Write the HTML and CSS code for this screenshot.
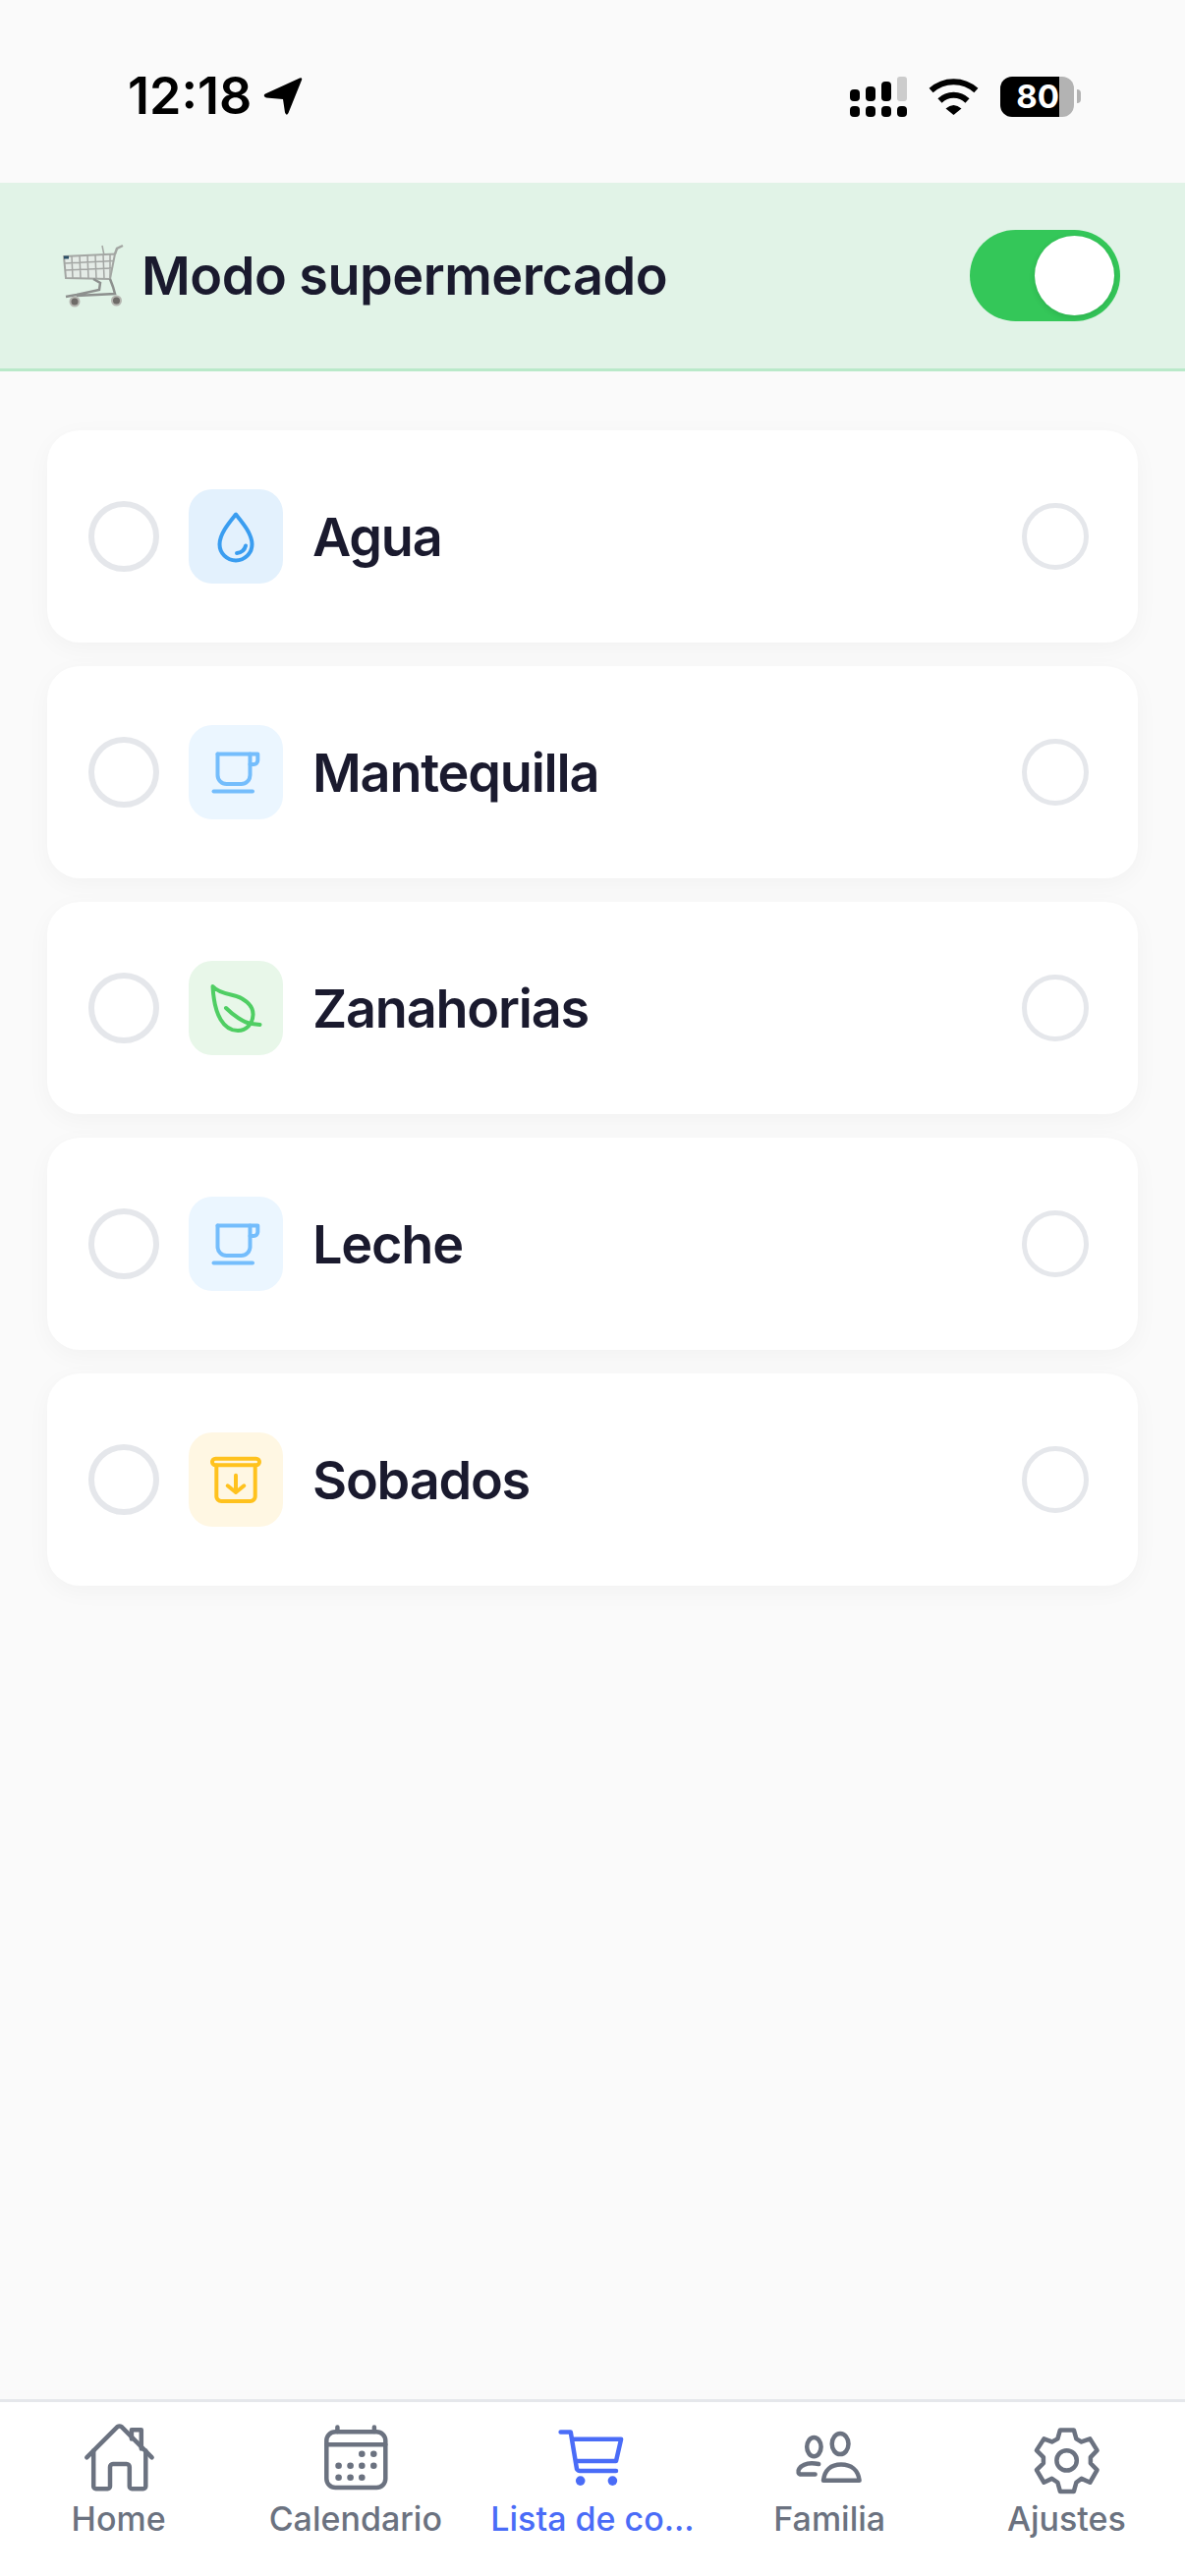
FILE: index.html
```html
<!DOCTYPE html>
<html lang="es">
<head>
  <meta charset="UTF-8">
  <title>Lista de compras</title>
  <link rel="stylesheet" href="styles.css">
</head>
<body>
  <div class="app">
    <!-- status bar -->
    <div class="status-bar">
      <div class="status-left">
        <span class="time">12:18</span>
        <svg class="arrow" width="40" height="40" viewBox="0 0 40 40"><path d="M37 1.500Q40 .8 39 3.500L25.500 37Q23.500 40.500 22 36.500L20 23L3 21.500Q-1 19.500 2 17.500Z" fill="#000"/></svg>
      </div>
      <div class="status-right">
        <svg width="58" height="41" viewBox="0 0 58 41">
          <rect x="0" y="13" width="10" height="12" rx="4" fill="#000"/>
          <rect x="16" y="10" width="10" height="15" rx="4" fill="#000"/>
          <rect x="32" y="5" width="10" height="20" rx="4" fill="#000"/>
          <rect x="48" y="0" width="10" height="25" rx="3" fill="#ccc"/>
          <rect x="0" y="30" width="10" height="11" rx="4" fill="#000"/>
          <rect x="16" y="30" width="10" height="11" rx="4" fill="#000"/>
          <rect x="32" y="30" width="10" height="11" rx="4" fill="#000"/>
          <rect x="48" y="30" width="10" height="11" rx="4" fill="#000"/>
        </svg>
        <svg class="wifi" width="51" height="38" viewBox="0 0 51 38" fill="none" stroke="#000" stroke-width="6">
          <path d="M2.600 13A34 34 0 0 1 48.400 13"/>
          <path d="M11.500 23.500A20 20 0 0 1 39.500 23.500"/>
          <path d="M17.500 31.500Q25.500 24.500 33.500 31.500L25.500 38Z" fill="#000" stroke="none"/>
        </svg>
        <div class="battery">
          <div class="battery-level">80</div>
          <div class="battery-rest"></div>
          <div class="battery-nub"></div>
        </div>
      </div>
    </div>

    <!-- modo supermercado -->
    <div class="market-bar">
      <div class="market-title">
        <svg class="cart-emoji" width="66" height="70" viewBox="0 0 66 70" fill="none" stroke="#a3a6a3" stroke-width="1.500">
          <path d="M3 15L55 12.500L50 38L5 37Z" fill="#e4ebe6" stroke-width="2"/>
          <path d="M3.500 22L54 19.500M4 29L52 27M11 14.500L12 37M19 14L20 37.500M27 13.500L28 38M35 13.500L36 38M43 13L44 38M50 12.500V38"/>
          <path d="M55 12.500L57 7L63 4" stroke-width="2.500"/>
          <path d="M42 4L44 14" stroke-width="1.500"/>
          <path d="M33 38L40 42L39 49L16 54L5 56M50 38L53 46L55 53L16 55" stroke="#8d908e" stroke-width="2.500"/>
          <circle cx="14" cy="61" r="4.500" fill="#6e6b68" stroke="#b5b5b0" stroke-width="2"/>
          <circle cx="56.500" cy="60" r="4.500" fill="#6e6b68" stroke="#b5b5b0" stroke-width="2"/>
          <rect x="3" y="14.500" width="5" height="3" fill="#2b4f66" stroke="none"/>
        </svg>
        <span>Modo supermercado</span>
      </div>
      <div class="toggle"><div class="toggle-knob"></div></div>
    </div>

    <!-- productos -->
    <div class="list">
      <div class="item">
        <div class="check"></div>
        <div class="item-icon water">
          <svg width="60" height="60" viewBox="0 0 60 60" fill="none" stroke="#3a9df0" stroke-width="4" stroke-linecap="round" stroke-linejoin="round">
            <path d="M30 7.500C24 15 13.500 27 13.500 38A16.500 16.500 0 0 0 46.500 38C46.500 27 36 15 30 7.500Z"/>
            <path d="M31 47C35.500 46.500 39 43.500 40 39.500"/>
          </svg>
        </div>
        <span class="item-name">Agua</span>
        <div class="check-right"></div>
      </div>
      <div class="item">
        <div class="check"></div>
        <div class="item-icon dairy">
          <svg width="60" height="60" viewBox="0 0 60 60" fill="none" stroke="#74bdfc" stroke-width="4" stroke-linecap="round" stroke-linejoin="round">
            <path d="M11.500 11.500H52.300V18A4 4 0 0 1 48.300 22H44.500"/>
            <path d="M11.500 11.500V33A9 9 0 0 0 20.500 42H35.500A9 9 0 0 0 44.500 33V11.500"/>
            <path d="M7.500 49.500H47"/>
          </svg>
        </div>
        <span class="item-name">Mantequilla</span>
        <div class="check-right"></div>
      </div>
      <div class="item">
        <div class="check"></div>
        <div class="item-icon veg">
          <svg width="60" height="60" viewBox="0 0 60 60" fill="none" stroke="#4fce63" stroke-width="4" stroke-linecap="round" stroke-linejoin="round">
            <path d="M6.500 8C10 12 18 15 25 16.500C38 19 48 27 47.500 37C47 46 41 53 32 53C18 53 8 38 6.500 8Z"/>
            <path d="M20 30C27 37 38 45 46 46L54.500 47"/>
          </svg>
        </div>
        <span class="item-name">Zanahorias</span>
        <div class="check-right"></div>
      </div>
      <div class="item">
        <div class="check"></div>
        <div class="item-icon dairy">
          <svg width="60" height="60" viewBox="0 0 60 60" fill="none" stroke="#74bdfc" stroke-width="4" stroke-linecap="round" stroke-linejoin="round">
            <path d="M11.500 11.500H52.300V18A4 4 0 0 1 48.300 22H44.500"/>
            <path d="M11.500 11.500V33A9 9 0 0 0 20.500 42H35.500A9 9 0 0 0 44.500 33V11.500"/>
            <path d="M7.500 49.500H47"/>
          </svg>
        </div>
        <span class="item-name">Leche</span>
        <div class="check-right"></div>
      </div>
      <div class="item">
        <div class="check"></div>
        <div class="item-icon pantry">
          <svg width="60" height="60" viewBox="0 0 60 60" fill="none" stroke="#ffc21e" stroke-width="4" stroke-linecap="round" stroke-linejoin="round">
            <rect x="6" y="8.700" width="48" height="6.600" rx="3.300"/>
            <path d="M10.300 15.500V47A5 5 0 0 0 15.300 52H44.700A5 5 0 0 0 49.700 47V15.500"/>
            <path d="M30 25.700V43M21.700 36.300L30 43L38.300 36.300"/>
          </svg>
        </div>
        <span class="item-name">Sobados</span>
        <div class="check-right"></div>
      </div>
    </div>

    <!-- tab bar -->
    <div class="tabs">
      <div class="tab">
        <svg class="tab-icon" viewBox="0 0 24 24">
          <path d="M1.100 11.800L11.500 1.400Q12.200 .9 12.900 1.400L23.200 11.800"/>
          <path d="M3.400 9.500V21.600A.8 .8 0 0 0 4.200 22.400H8.200A.8 .8 0 0 0 9 21.600V15A1 1 0 0 1 10 14H14.600A1 1 0 0 1 15.600 15V21.600A.8 .8 0 0 0 16.400 22.400H20.300A.8 .8 0 0 0 21.100 21.600V9.500"/>
          <path d="M16.300 5.500V2.400H19.600V8.800"/>
        </svg>
        <span class="tab-label">Home</span>
      </div>
      <div class="tab">
        <svg class="tab-icon" viewBox="0 0 24 24">
          <rect x="2.100" y="3.100" width="20" height="18.900" rx="3"/>
          <path d="M2.100 7.400H22.100M5.800 1.500V3M18.300 1.500V3"/>
          <g class="dots">
            <circle cx="14.100" cy="10.600" r="1.100"/><circle cx="18.100" cy="10.600" r="1.100"/>
            <circle cx="6.200" cy="14.600" r="1.100"/><circle cx="10.200" cy="14.600" r="1.100"/><circle cx="14.100" cy="14.600" r="1.100"/><circle cx="18.100" cy="14.600" r="1.100"/>
            <circle cx="6.200" cy="18.600" r="1.100"/><circle cx="10.200" cy="18.600" r="1.100"/><circle cx="14.100" cy="18.600" r="1.100"/>
          </g>
        </svg>
        <span class="tab-label">Calendario</span>
      </div>
      <div class="tab active">
        <svg class="tab-icon" viewBox="0 0 24 24">
          <path d="M1.200 3.200H4.600L6.600 15.300A1 1 0 0 0 7.600 16.300H20"/>
          <path d="M5.400 5.600H21.700L20 13H6.400"/>
          <g class="dots">
            <circle cx="7.900" cy="19.700" r="1.600"/><circle cx="18.800" cy="19.700" r="1.600"/>
          </g>
        </svg>
        <span class="tab-label">Lista de co...</span>
      </div>
      <div class="tab">
        <svg class="tab-icon" viewBox="0 0 24 24">
          <ellipse cx="6.800" cy="8.200" rx="2.400" ry="3.200"/>
          <ellipse cx="15.700" cy="7.200" rx="2.800" ry="3.500"/>
          <path d="M10 19.600C10.400 16 12.600 14.200 16 14.200C19.400 14.200 21.800 16 22.200 19.600Z"/>
          <path d="M7.200 17.500H2.600C1.400 17.500 1.200 16.500 1.800 15.600C2.800 14.200 4.400 13.200 8.400 14"/>
        </svg>
        <span class="tab-label">Familia</span>
      </div>
      <div class="tab">
        <svg class="tab-icon" viewBox="0 0 24 24">
          <path d="M9.970 2.480H14.620L15.460 5.460L17.220 6.480L20.100 5.460L22.520 9.370L20.290 11.690V13.740L22.520 16.060L20.100 20.250L17.220 18.950L15.460 20.250L14.620 23.320H9.970L9.130 20.250L7.180 18.950L4.480 20.250L1.970 16.060L4.300 13.740V11.690L1.970 9.370L4.480 5.460L7.180 6.480L9.130 5.460Z"/>
          <circle cx="12.200" cy="12.800" r="3.400"/>
        </svg>
        <span class="tab-label">Ajustes</span>
      </div>
    </div>
  </div>
</body>
</html>
```

FILE: styles.css
```css
* {
  margin: 0;
  padding: 0;
  box-sizing: border-box;
}
body {
  font-family: Inter, "Liberation Sans", sans-serif;
  background: #fafafa;
  color: #1a1a2e;
}
.app {
  display: flex;
  flex-direction: column;
  height: 100vh;
}
/* status bar */
.status-bar {
  display: flex;
  justify-content: space-between;
  align-items: center;
  height: 186px;
  padding: 10px 106px 0 130px;
  color: #000;
}
.status-left {
  display: flex;
  align-items: center;
  gap: 12px;
}
.time {
  font-size: 52px;
  font-weight: 600;
  line-height: 60px;
}
.status-right {
  display: flex;
  align-items: center;
  gap: 22px;
}
.battery {
  display: flex;
  align-items: center;
  height: 41px;
}
.battery-level {
  width: 60px;
  height: 41px;
  background: #000;
  border-radius: 12px 0 0 12px;
  color: #fff;
  font-size: 33px;
  font-weight: 700;
  line-height: 41px;
  text-align: right;
}
.battery-rest {
  width: 15px;
  height: 41px;
  background: #b3b3b3;
  border-radius: 0 12px 12px 0;
}
.battery-nub {
  width: 4px;
  height: 14px;
  margin-left: 3px;
  background: #b3b3b3;
  border-radius: 0 7px 7px 0;
}
/* supermarket mode bar */
.market-bar {
  display: flex;
  justify-content: space-between;
  align-items: center;
  height: 192px;
  padding: 0 66px 0 62px;
  background: #e1f3e7;
  border-bottom: 3px solid #b9e9c9;
}
.market-title {
  display: flex;
  align-items: center;
  gap: 16px;
  font-size: 54px;
  font-weight: 600;
  letter-spacing: -0.5px;
}
.toggle {
  display: flex;
  justify-content: flex-end;
  align-items: center;
  width: 153px;
  height: 93px;
  padding: 6px;
  background: #34c759;
  border-radius: 47px;
}
.toggle-knob {
  width: 81px;
  height: 81px;
  background: #fff;
  border-radius: 50%;
  box-shadow: 0 2px 6px rgba(0,0,0,0.12);
}
/* product list */
.list {
  flex: 1;
  display: flex;
  flex-direction: column;
  gap: 24px;
  padding: 60px 48px 0;
}
.item {
  display: flex;
  align-items: center;
  height: 216px;
  padding: 0 50px 0 42px;
  background: #fff;
  border-radius: 33px;
  box-shadow: 0 6px 24px rgba(0,0,0,0.035);
}
.check {
  width: 72px;
  height: 72px;
  border: 6px solid #e5e7eb;
  border-radius: 50%;
}
.check-right {
  width: 68px;
  height: 68px;
  border: 5px solid #e5e7eb;
  border-radius: 50%;
}
.item-icon {
  display: flex;
  justify-content: center;
  align-items: center;
  width: 96px;
  height: 96px;
  margin: 0 30px 0 30px;
  border-radius: 24px;
}
.water { background: #e3f1fd; }
.dairy { background: #ebf6ff; }
.veg { background: #e8f7e9; }
.pantry { background: #fff7e3; }
.item-name {
  flex: 1;
  font-size: 54px;
  font-weight: 600;
  letter-spacing: -1.2px;
}
/* tab bar */
.tabs {
  display: flex;
  height: 180px;
  padding-top: 21px;
  background: #fff;
  border-top: 3px solid #e5e7eb;
}
.tab {
  flex: 1;
  min-width: 0;
  display: flex;
  flex-direction: column;
  align-items: center;
  color: #6b7280;
}
.tab.active {
  color: #4a6cf7;
}
.tab-icon {
  width: 72px;
  height: 72px;
  overflow: visible;
  fill: none;
  stroke: currentColor;
  stroke-width: 1.5;
  stroke-linecap: round;
  stroke-linejoin: round;
}
.tab-icon .dots {
  fill: currentColor;
  stroke: none;
}
.tab-label {
  margin-top: 6px;
  font-size: 34px;
  font-weight: 500;
  line-height: 40px;
  white-space: nowrap;
}
```
